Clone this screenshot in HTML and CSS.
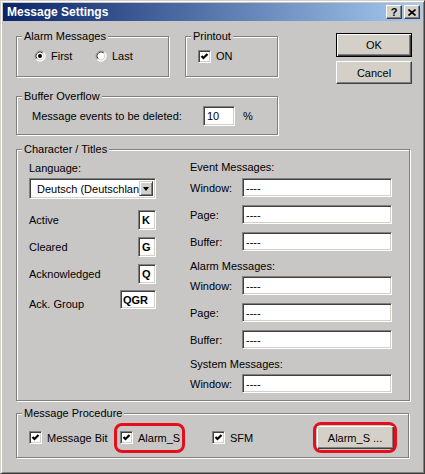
FILE: index.html
```html
<!DOCTYPE html>
<html lang="en">
<head>
    <meta charset="UTF-8">
    <title>Message Settings</title>
    <link rel="stylesheet" href="styles.css">
</head>
<body>
    <div class="window">
        <div class="titlebar">
            <span class="title">Message Settings</span>
            <span class="caption-btn help">?</span>
            <span class="caption-btn close">
                <svg width="8" height="7" viewBox="0 0 8 7"><path d="M0.5 0.5L7.5 6.5M7.5 0.5L0.5 6.5" stroke="#000" stroke-width="1.6" fill="none"/></svg>
            </span>
        </div>

        <div class="client">
            <div class="top">
                <div class="top-left">
                    <div class="group-row">
                        <div class="group alarm">
                            <span class="group-title">Alarm Messages</span>
                            <span class="option first">
                                <svg class="radio" width="12" height="12" viewBox="0 0 12 12">
                                    <circle cx="6" cy="6" r="5.5" fill="#fff"/>
                                    <path d="M2.46 9.54A5 5 0 0 1 9.54 2.46" stroke="#808080" fill="none"/>
                                    <path d="M9.54 2.46A5 5 0 0 1 2.46 9.54" stroke="#fff" fill="none"/>
                                    <path d="M3.17 8.83A4 4 0 0 1 8.83 3.17" stroke="#404040" fill="none"/>
                                    <path d="M8.83 3.17A4 4 0 0 1 3.17 8.83" stroke="#d4d0c8" fill="none"/>
                                    <circle cx="6" cy="6" r="2" fill="#000"/>
                                </svg>
                                First
                            </span>
                            <span class="option">
                                <svg class="radio" width="12" height="12" viewBox="0 0 12 12">
                                    <circle cx="6" cy="6" r="5.5" fill="#fff"/>
                                    <path d="M2.46 9.54A5 5 0 0 1 9.54 2.46" stroke="#808080" fill="none"/>
                                    <path d="M9.54 2.46A5 5 0 0 1 2.46 9.54" stroke="#fff" fill="none"/>
                                    <path d="M3.17 8.83A4 4 0 0 1 8.83 3.17" stroke="#404040" fill="none"/>
                                    <path d="M8.83 3.17A4 4 0 0 1 3.17 8.83" stroke="#d4d0c8" fill="none"/>
                                </svg>
                                Last
                            </span>
                        </div>
                        <div class="group printout">
                            <span class="group-title">Printout</span>
                            <span class="option">
                                <span class="check"><svg width="9" height="9" viewBox="0 0 9 9"><polyline points="1.5,4 3.5,6 7.5,2" stroke="#000" stroke-width="2.2" fill="none"/></svg></span>
                                ON
                            </span>
                        </div>
                    </div>

                    <div class="group buffer">
                        <span class="group-title">Buffer Overflow</span>
                        <span class="buffer-text">Message events to be deleted:</span>
                        <span class="field short">10</span>
                        <span class="percent">%</span>
                    </div>
                </div>

                <div class="buttons">
                    <span class="btn default">OK</span>
                    <span class="btn">Cancel</span>
                </div>
            </div>

            <div class="group chars">
                <span class="group-title">Character / Titles</span>
                <div class="chars-left">
                    <div class="caption lang">Language:</div>
                    <div class="combo">
                        <span class="combo-text">Deutsch (Deutschlan</span>
                        <span class="combo-btn"><span class="arrow"></span></span>
                    </div>
                    <div class="key-row first-key"><span>Active</span><span class="key">K</span></div>
                    <div class="key-row"><span>Cleared</span><span class="key">G</span></div>
                    <div class="key-row"><span>Acknowledged</span><span class="key">Q</span></div>
                    <div class="key-row last-key"><span class="low">Ack. Group</span><span class="key wide">QGR</span></div>
                </div>
                <div class="chars-right">
                    <div class="caption">Event Messages:</div>
                    <div class="field-row"><span class="field-label">Window:</span><span class="field">----</span></div>
                    <div class="field-row"><span class="field-label">Page:</span><span class="field">----</span></div>
                    <div class="field-row"><span class="field-label">Buffer:</span><span class="field">----</span></div>

                    <div class="caption section">Alarm Messages:</div>
                    <div class="field-row"><span class="field-label">Window:</span><span class="field">----</span></div>
                    <div class="field-row"><span class="field-label">Page:</span><span class="field">----</span></div>
                    <div class="field-row"><span class="field-label">Buffer:</span><span class="field">----</span></div>

                    <div class="caption section">System Messages:</div>
                    <div class="field-row"><span class="field-label">Window:</span><span class="field">----</span></div>
                </div>
            </div>

            <div class="group procedure">
                <span class="group-title">Message Procedure</span>
                <span class="option msg-bit">
                    <span class="check"><svg width="9" height="9" viewBox="0 0 9 9"><polyline points="1.5,4 3.5,6 7.5,2" stroke="#000" stroke-width="2.2" fill="none"/></svg></span>
                    Message Bit
                </span>
                <span class="marked alarm-s">
                    <span class="option">
                        <span class="check"><svg width="9" height="9" viewBox="0 0 9 9"><polyline points="1.5,4 3.5,6 7.5,2" stroke="#000" stroke-width="2.2" fill="none"/></svg></span>
                        Alarm_S
                    </span>
                </span>
                <span class="option sfm">
                    <span class="check"><svg width="9" height="9" viewBox="0 0 9 9"><polyline points="1.5,4 3.5,6 7.5,2" stroke="#000" stroke-width="2.2" fill="none"/></svg></span>
                    SFM
                </span>
                <span class="marked alarm-btn">
                    <span class="btn small">Alarm_S ...</span>
                </span>
            </div>
        </div>
    </div>
</body>
</html>
```

FILE: styles.css
```css
body {
    margin: 0;
    font-family: "Liberation Sans", Arial, sans-serif;
    font-size: 11px;
    color: #000;
    background: #c9c6c6;
}
.window {
    width: 425px;
    height: 474px;
    box-sizing: border-box;
    background: #c9c6c6;
    border: 1px solid;
    border-color: #d4d0c8 #404040 #404040 #d4d0c8;
    box-shadow: inset 1px 1px #fff, inset -1px -1px #808080;
    padding: 2px;
}
.titlebar {
    height: 18px;
    display: flex;
    align-items: center;
    padding: 0 2px;
    background: linear-gradient(to right, #0a246a, #a6caf0);
}
.title {
    flex: 1;
    padding-left: 2px;
    color: #fff;
    font-weight: bold;
    font-size: 12px;
}
.caption-btn {
    width: 16px;
    height: 14px;
    box-sizing: border-box;
    display: flex;
    align-items: center;
    justify-content: center;
    background: #d4d0c8;
    border: 1px solid;
    border-color: #fff #404040 #404040 #fff;
    box-shadow: inset -1px -1px #808080;
    font-weight: bold;
    font-size: 11px;
    line-height: 1;
}
.caption-btn.close { margin-left: 2px; }

.client { padding: 12px 0 0 13px; }
.top { display: flex; align-items: flex-start; }
.top-left { width: 262px; margin-top: 3px; }
.group-row { display: flex; gap: 16px; }

/* etched group box */
.group {
    position: relative;
    box-sizing: border-box;
    border: 1px solid #808080;
    box-shadow: inset 1px 1px #fff, 1px 1px #fff;
}
.group-title {
    position: absolute;
    top: -7px;
    left: 5px;
    padding: 0 2px;
    line-height: 13px;
    background: #c9c6c6;
}
.option {
    display: flex;
    align-items: center;
    gap: 5px;
    line-height: 14px;
    white-space: nowrap;
}
.radio { display: block; }
.check {
    width: 13px;
    height: 13px;
    box-sizing: border-box;
    display: flex;
    align-items: center;
    justify-content: center;
    background: #fff;
    border: 1px solid;
    border-color: #808080 #fff #fff #808080;
    box-shadow: inset 1px 1px #404040, inset -1px -1px #d4d0c8;
}
.check svg { display: block; }

.alarm {
    width: 153px;
    height: 41px;
    display: flex;
    align-items: flex-start;
    padding: 12px 0 0 17px;
}
.alarm .first { width: 61px; }
.printout {
    width: 93px;
    height: 41px;
    padding: 12px 0 0 12px;
}
.buffer {
    width: 262px;
    height: 39px;
    margin-top: 19px;
    display: flex;
    align-items: center;
    padding: 0 0 0 15px;
}
.buffer-text { width: 171px; }
.percent { margin-left: 8px; }

.field {
    box-sizing: border-box;
    height: 19px;
    width: 150px;
    display: flex;
    align-items: center;
    padding: 0 3px;
    background: #fff;
    border: 1px solid;
    border-color: #808080 #fff #fff #808080;
    box-shadow: inset 1px 1px #404040, inset -1px -1px #d4d0c8;
}
.field.short { width: 32px; height: 20px; }

.buttons { margin-left: 58px; }
.btn {
    box-sizing: border-box;
    width: 76px;
    height: 23px;
    display: flex;
    align-items: center;
    justify-content: center;
    background: #d4d0c8;
    border: 1px solid;
    border-color: #fff #404040 #404040 #fff;
    box-shadow: inset -1px -1px #808080;
}
.btn.default {
    height: 24px;
    margin-bottom: 4px;
    border-color: #000;
    box-shadow: inset 1px 1px #fff, inset -1px -1px #404040, inset -2px -2px #808080;
}

.chars {
    width: 394px;
    height: 252px;
    margin-top: 14px;
    display: flex;
    gap: 34px;
    padding: 10px 0 0 12px;
}
.caption { line-height: 14px; }
.chars-left { width: 127px; }
.lang { margin-top: 1px; }
.combo {
    box-sizing: border-box;
    height: 21px;
    margin-top: 3px;
    display: flex;
    align-items: center;
    padding: 2px;
    background: #fff;
    border: 1px solid;
    border-color: #808080 #fff #fff #808080;
    box-shadow: inset 1px 1px #404040, inset -1px -1px #d4d0c8;
}
.combo-text {
    flex: 1;
    white-space: nowrap;
    padding-left: 5px;
}
.combo-btn {
    box-sizing: border-box;
    width: 16px;
    height: 15px;
    display: flex;
    align-items: center;
    justify-content: center;
    background: #d4d0c8;
    border: 1px solid;
    border-color: #d4d0c8 #404040 #404040 #d4d0c8;
    box-shadow: inset 1px 1px #fff, inset -1px -1px #808080;
}
.arrow {
    border-left: 3.5px solid transparent;
    border-right: 3.5px solid transparent;
    border-top: 4px solid #000;
}
.key-row {
    height: 20px;
    margin-top: 7px;
    display: flex;
    align-items: center;
    justify-content: space-between;
}
.key-row.first-key { margin-top: 11px; }
.key-row.last-key { margin-top: 6px; align-items: flex-start; }
.low { margin-top: 7px; line-height: 14px; }
.key {
    box-sizing: border-box;
    width: 18px;
    height: 20px;
    display: flex;
    align-items: center;
    padding-left: 3px;
    font-weight: bold;
    background: #fff;
    border: 1px solid;
    border-color: #808080 #fff #fff #808080;
    box-shadow: inset 1px 1px #404040, inset -1px -1px #d4d0c8;
}
.key.wide { width: 36px; height: 19px; padding-left: 2px; }

.chars-right { width: 202px; }
.chars-right .caption { margin-bottom: 4px; }
.chars-right .caption.section { margin-top: 8px; margin-bottom: 3px; }
.field-row { display: flex; align-items: center; }
.field-row + .field-row { margin-top: 8px; }
.field-label { width: 52px; }

.procedure {
    width: 393px;
    height: 45px;
    margin-top: 12px;
    display: flex;
    align-items: center;
    padding: 4px 11px 0 12px;
}
.msg-bit { width: 85px; }
.marked {
    box-sizing: border-box;
    display: flex;
    align-items: center;
    border: 3px solid #e3101c;
    border-radius: 8px;
}
.alarm-s {
    width: 71px;
    height: 30px;
    padding-left: 3px;
}
.sfm { margin-left: 27px; }
.alarm-btn {
    width: 84px;
    height: 31px;
    margin-left: auto;
    justify-content: center;
}
.btn.small { width: 77px; }
```
